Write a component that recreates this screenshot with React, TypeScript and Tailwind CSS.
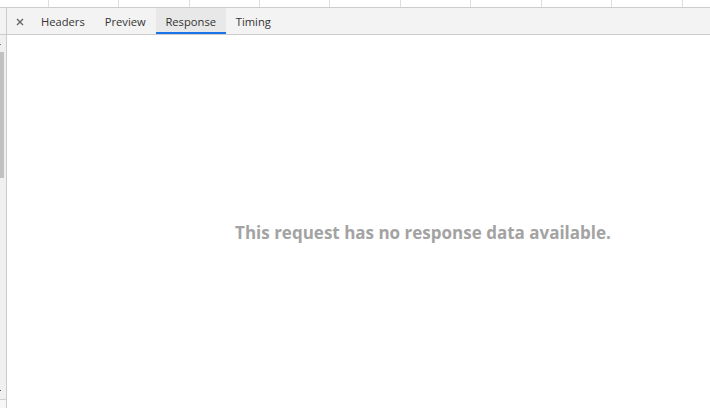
import React from "react";

const font = { fontFamily: '"Open Sans", "Noto Sans", sans-serif' };

export default function App() {
  return (
    <div className="w-[710px] h-[408px] overflow-hidden bg-white flex flex-col font-['Open_Sans',sans-serif]">
      {/* top grid strip */}
      <div className="h-[7px] flex shrink-0">
        <div className="w-[48px] h-full" />
        <div className="w-[70px] h-full border-l border-[#dedede]" />
        <div className="w-[71px] h-full border-l border-[#dedede]" />
        <div className="w-[70px] h-full border-l border-[#dedede]" />
        <div className="w-[70px] h-full border-l border-[#dedede]" />
        <div className="w-[71px] h-full border-l border-[#dedede]" />
        <div className="w-[70px] h-full border-l border-[#dedede]" />
        <div className="w-[71px] h-full border-l border-[#dedede]" />
        <div className="w-[70px] h-full border-l border-[#dedede]" />
        <div className="w-[71px] h-full border-l border-[#dedede]" />
        <div className="flex-1 h-full border-l border-[#dedede]" />
      </div>
      <div className="flex-1 flex border-t border-[#cbcbcb] min-h-0">
        {/* left strip */}
        <div className="w-[7px] shrink-0 flex flex-col border-r border-[#cbcbcb]">
          <div className="h-[27px] bg-[#f3f3f3] border-b border-[#cbcbcb] shrink-0" />
          <div className="flex-1 bg-[#f0f0f0] flex flex-col">
            <div className="h-[10px] relative">
              <div className="absolute left-0 top-[9px] w-[1px] h-[1px] bg-[#777]" />
            </div>
            <div className="mt-[7px] w-[4px] h-[126px] bg-[#c1c1c1]" />
            <div className="flex-1" />
            <div className="h-[10px] relative">
              <div className="absolute left-0 top-[1px] w-[1px] h-[1px] bg-[#555]" />
            </div>
            <div className="h-[9px] border-t border-[#d0d0d0] bg-[#f7f7f7]" />
          </div>
        </div>
        {/* main */}
        <div className="flex-1 flex flex-col min-w-0">
          <div className="h-[27px] shrink-0 bg-[#f3f3f3] border-b border-[#cbcbcb] flex items-stretch text-[11.2px] text-[#333]" style={font}>
            <div className="w-[24px] flex items-center justify-center">
              <svg width="8" height="8" viewBox="0 0 8 8" className="ml-[1px] mt-[1px]">
                <path d="M1 1 L7 7 M7 1 L1 7" stroke="#666" strokeWidth="1.4" />
              </svg>
            </div>
            <div className="px-[10px] pt-[2px] flex items-center">Headers</div>
            <div className="px-[10px] pt-[2px] flex items-center">Preview</div>
            <div className="w-[70px] justify-center flex items-center bg-[#e8e8e8] border-b-2 border-[#1a73e8] pt-[4px]">Response</div>
            <div className="px-[10px] pt-[2px] flex items-center">Timing</div>
          </div>
          <div className="flex-1 flex items-center justify-center pl-[129px] pt-[22px]">
            <div className="text-[17px] font-bold text-[#a3a3a3] whitespace-nowrap" style={font}>
              This request has no response data available.
            </div>
          </div>
        </div>
      </div>
    </div>
  );
}
